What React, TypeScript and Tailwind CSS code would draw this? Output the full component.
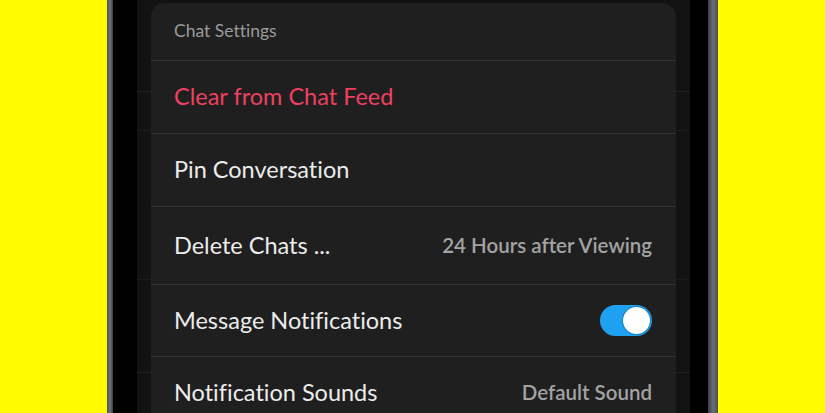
import React from 'react';

type Row = {
	label: string;
	value?: string;
	toggle?: boolean;
	danger?: boolean;
	height: string;
};

const rows: Row[] = [
	{ label: 'Clear from Chat Feed', danger: true, height: 'h-[73px]' },
	{ label: 'Pin Conversation', height: 'h-[73px]' },
	{ label: 'Delete Chats ...', value: '24 Hours after Viewing', height: 'h-[78px]' },
	{ label: 'Message Notifications', toggle: true, height: 'h-[72px]' },
	{ label: 'Notification Sounds', value: 'Default Sound', height: 'h-[72px]' },
];

function Toggle() {
	return (
		<div className="w-[52px] h-[31px] rounded-full bg-[#1ea1f1] flex items-center justify-end p-[2px]">
			<div className="w-[27px] h-[27px] rounded-full bg-white ring-1 ring-[#0d4f78]/40" />
		</div>
	);
}

// faint separators of the chat list behind the sheet
function Gutter() {
	return (
		<div className="w-[14px] bg-[#121212] flex flex-col">
			<div className="h-[92px] shrink-0 border-b border-[#222]" />
			<div className="h-[39px] shrink-0 border-b border-[#1c1c1c]" />
			<div className="h-[149px] shrink-0 border-b border-[#1c1c1c]" />
			<div className="h-[93px] shrink-0 border-b border-[#222]" />
		</div>
	);
}

export default function App() {
	return (
		<div
			className="w-[825px] h-[413px] overflow-hidden flex bg-[#fffc00] [font-variant-ligatures:none]"
			style={{ fontFamily: 'Lato, "Open Sans", sans-serif' }}
		>
			<div className="w-[107px]" />
			{/* phone frame, left edge */}
			<div className="w-[6px] bg-gradient-to-r from-[#4a4e55] via-[#70757d] to-[#3a3d42]" />
			<div className="w-[24px] bg-black" />
			<Gutter />

			{/* settings sheet */}
			<div className="w-[525px] bg-[#121212] pt-[3px] overflow-hidden">
				<div className="rounded-t-[14px] bg-[#1f1f1f] flex flex-col">
					<div className="h-[58px] shrink-0 flex items-center px-[23px] border-b border-[#333] text-[17.5px] text-[#9b9b9b]">
						Chat Settings
					</div>
					{rows.map((row) => (
						<div
							key={row.label}
							className={`${row.height} shrink-0 flex items-center justify-between pl-[23px] pr-[24px] border-b border-[#333]`}
						>
							<span
								className={`text-[23.5px] ${row.danger ? 'text-[#ee4060]' : 'text-[#ececec]'}`}
							>
								{row.label}
							</span>
							{row.value && (
								<span className="text-[20.5px] font-semibold text-[#a3a3a3]">{row.value}</span>
							)}
							{row.toggle && <Toggle />}
						</div>
					))}
				</div>
			</div>

			<Gutter />
			<div className="w-[18px] bg-black" />
			{/* phone frame, right edge */}
			<div className="w-[10px] bg-gradient-to-r from-[#3a3d42] via-[#6a6f77] to-[#4a4e55]" />
			<div className="flex-1" />
		</div>
	);
}
